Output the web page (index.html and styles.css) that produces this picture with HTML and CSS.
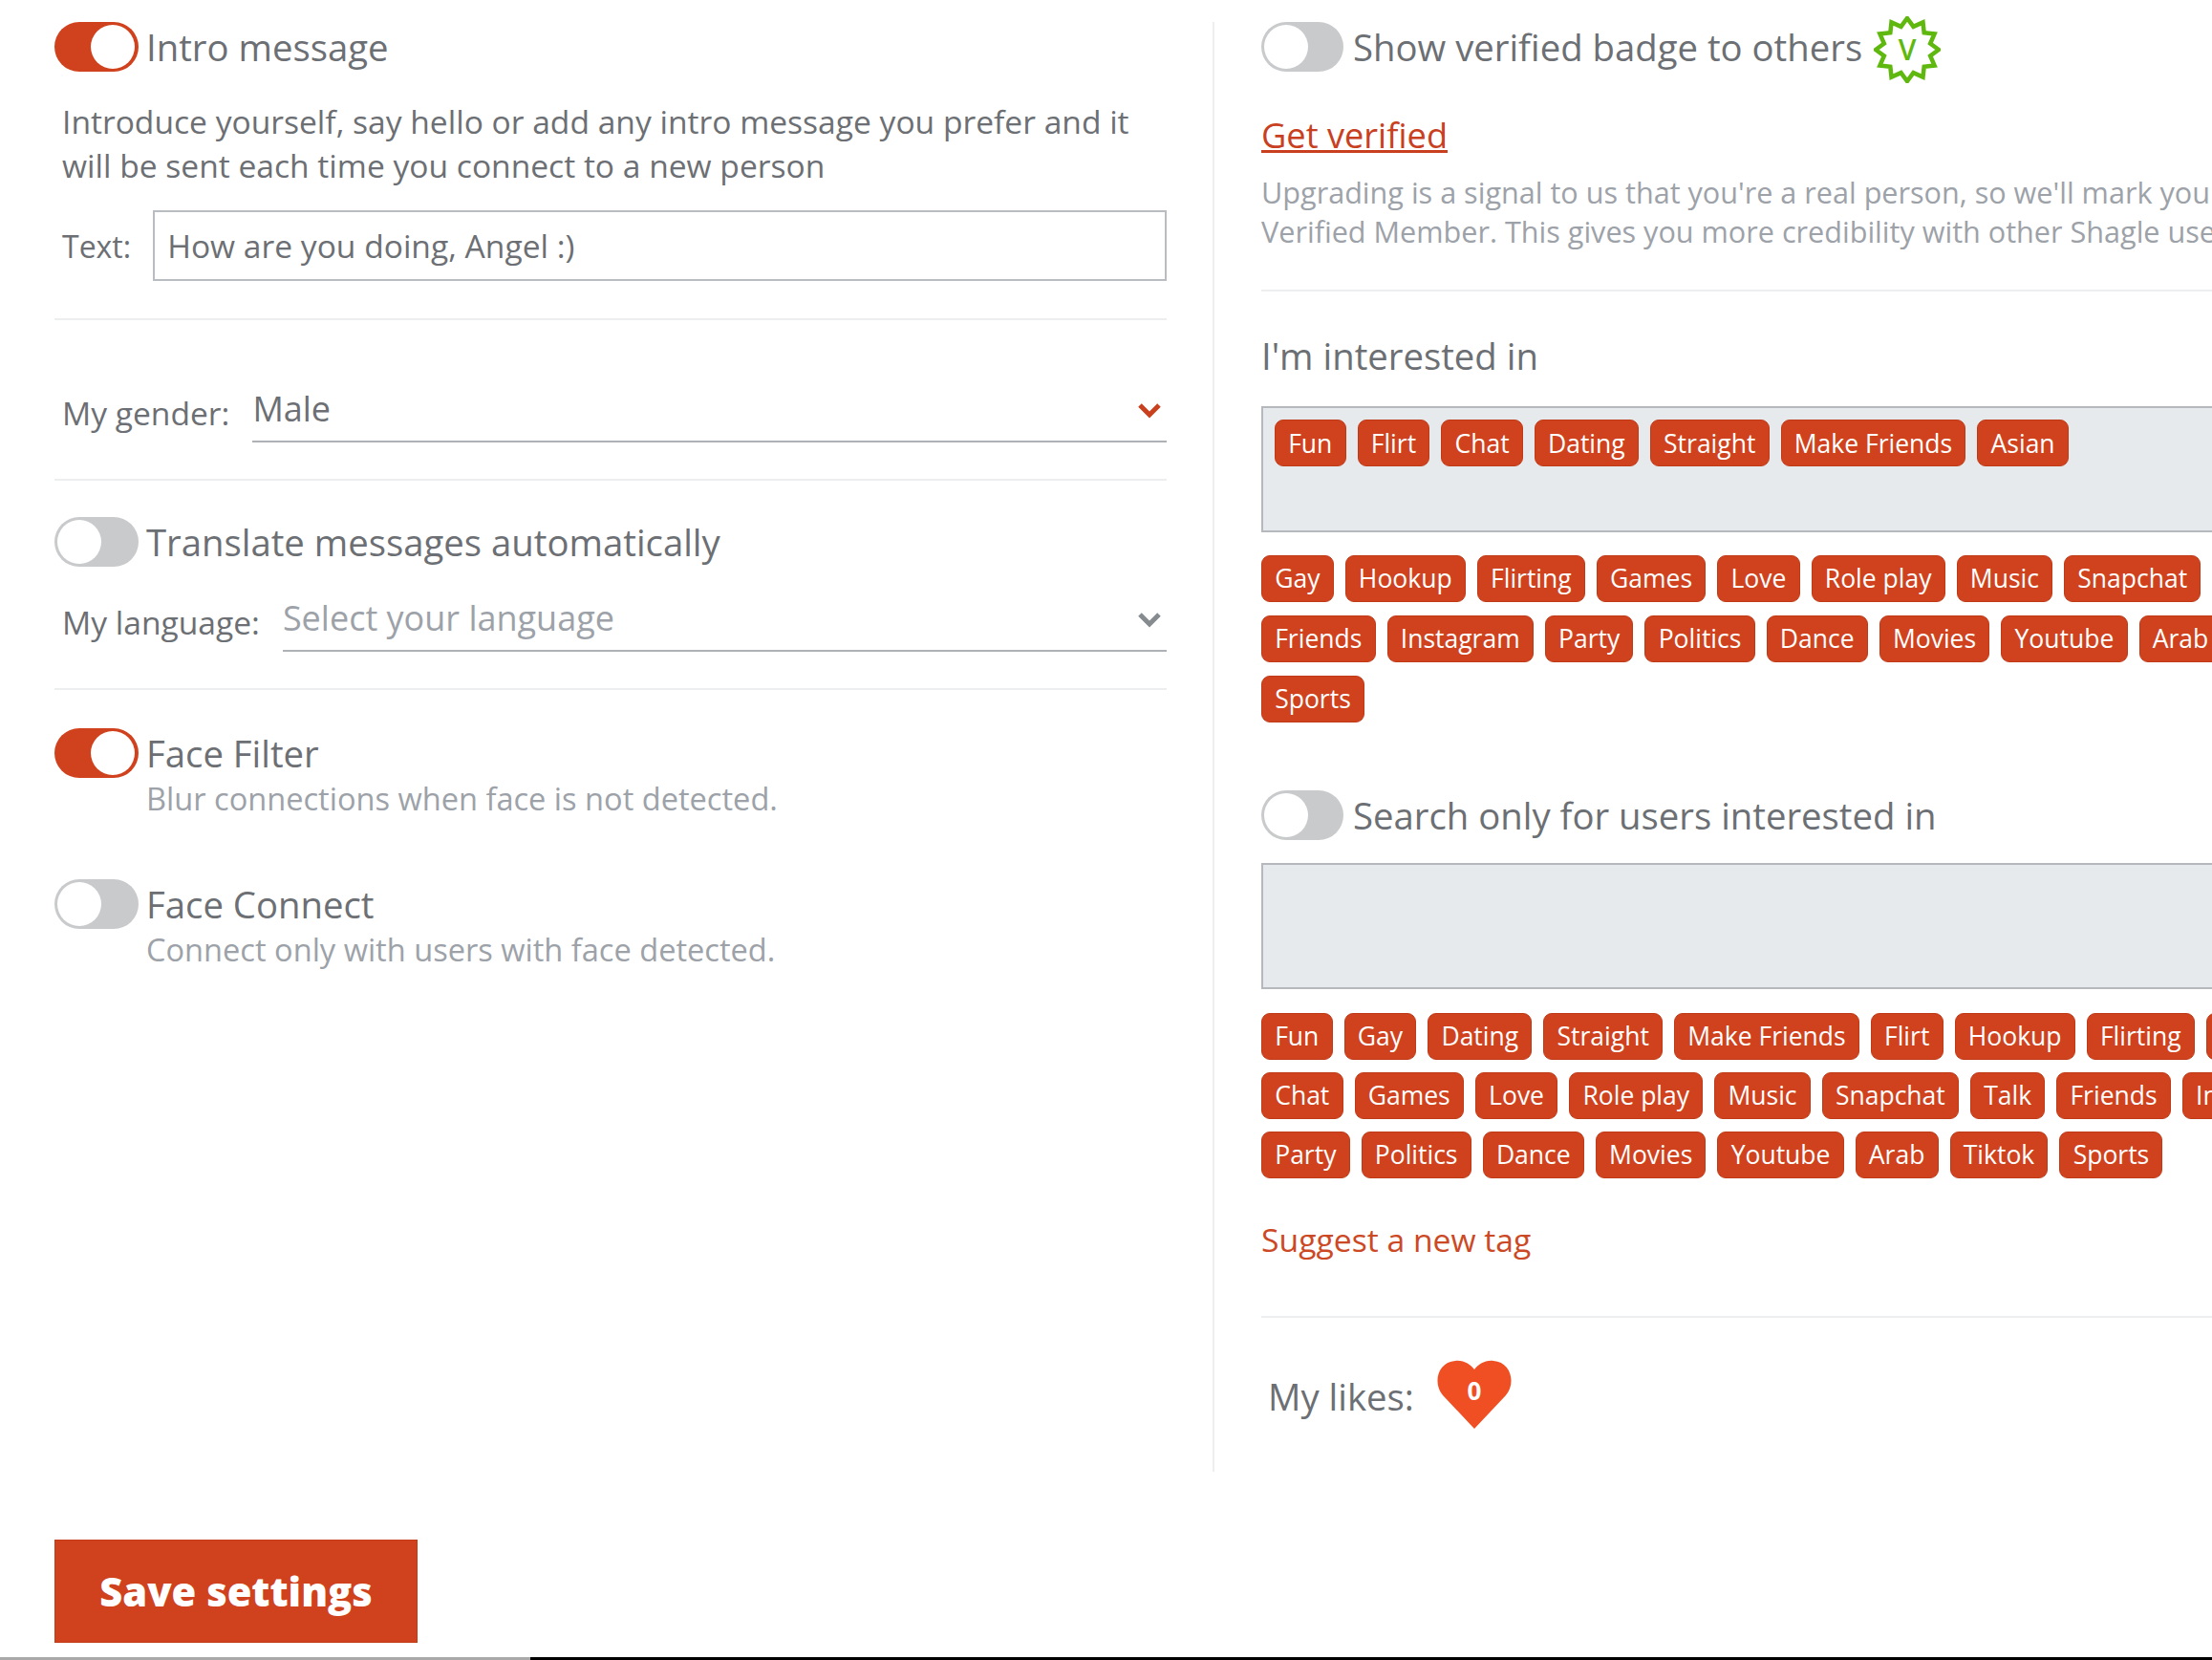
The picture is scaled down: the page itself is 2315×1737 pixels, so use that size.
FILE: index.html
```html
<!DOCTYPE html>
<html lang="en">
<head>
<meta charset="utf-8">
<title>Settings</title>
<link rel="stylesheet" href="styles.css">
</head>
<body>
<main class="columns">
  <section class="col-left">
    <div class="toggle-row">
      <span class="toggle on"></span>
      <div class="toggle-title">Intro message</div>
    </div>
    <p class="desc">Introduce yourself, say hello or add any intro message you prefer and it<br>will be sent each time you connect to a new person</p>
    <div class="text-row">
      <span class="label">Text:</span>
      <div class="text-input">How are you doing, Angel :)</div>
    </div>
    <hr class="rule rule-a">
    <div class="select-row gender-row">
      <span class="label select-label">My gender:</span>
      <div class="select">
        <span>Male</span>
        <svg class="chev" viewBox="0 0 26 17"><path d="M3 3l10 10L23 3" fill="none" stroke="#c9401e" stroke-width="5"/></svg>
      </div>
    </div>
    <hr class="rule rule-b">
    <div class="toggle-row mt-b">
      <span class="toggle"></span>
      <div class="toggle-title">Translate messages automatically</div>
    </div>
    <div class="select-row lang-row">
      <span class="label select-label">My language:</span>
      <div class="select placeholder">
        <span>Select your language</span>
        <svg class="chev" viewBox="0 0 26 17"><path d="M3 3l10 10L23 3" fill="none" stroke="#868b90" stroke-width="5"/></svg>
      </div>
    </div>
    <hr class="rule rule-b">
    <div class="toggle-row mt-c">
      <span class="toggle on"></span>
      <div>
        <div class="toggle-title">Face Filter</div>
        <div class="sub">Blur connections when face is not detected.</div>
      </div>
    </div>
    <div class="toggle-row mt-d">
      <span class="toggle"></span>
      <div>
        <div class="toggle-title">Face Connect</div>
        <div class="sub">Connect only with users with face detected.</div>
      </div>
    </div>
  </section>

  <section class="col-right">
    <div class="toggle-row">
      <span class="toggle"></span>
      <div class="toggle-title">Show verified badge to others</div>
      <svg class="badge" viewBox="0 0 70 70"><polygon points="35,2 41.47,10.85 51.5,6.42 52.68,17.32 63.58,18.5 59.15,28.53 68,35 59.15,41.47 63.58,51.5 52.68,52.68 51.5,63.58 41.47,59.15 35,68 28.53,59.15 18.5,63.58 17.32,52.68 6.42,51.5 10.85,41.47 2,35 10.85,28.53 6.42,18.5 17.32,17.32 18.5,6.42 28.53,10.85" fill="#fff" stroke="#5fb80e" stroke-width="4.5"/><text x="35" y="46" text-anchor="middle" class="badge-v">V</text></svg>
    </div>
    <a class="verify-link" href="#">Get verified</a>
    <p class="note">Upgrading is a signal to us that you're a real person, so we'll mark you as a<br>Verified Member. This gives you more credibility with other Shagle users.</p>
    <hr class="rule rule-c">
    <h2 class="heading">I'm interested in</h2>
    <div class="tag-box selected-box">
      <span class="tag">Fun</span><span class="tag">Flirt</span><span class="tag">Chat</span><span class="tag">Dating</span><span class="tag">Straight</span><span class="tag">Make Friends</span><span class="tag">Asian</span>
    </div>
    <div class="tags tags-a">
      <span class="tag">Gay</span><span class="tag">Hookup</span><span class="tag">Flirting</span><span class="tag">Games</span><span class="tag">Love</span><span class="tag">Role play</span><span class="tag">Music</span><span class="tag">Snapchat</span><span class="tag">Talk</span><span class="tag">Friends</span><span class="tag">Instagram</span><span class="tag">Party</span><span class="tag">Politics</span><span class="tag">Dance</span><span class="tag">Movies</span><span class="tag">Youtube</span><span class="tag">Arab</span><span class="tag">Tiktok</span><span class="tag">Sports</span>
    </div>
    <div class="toggle-row mt-e">
      <span class="toggle"></span>
      <div class="toggle-title">Search only for users interested in</div>
    </div>
    <div class="tag-box empty-box"></div>
    <div class="tags tags-b">
      <span class="tag">Fun</span><span class="tag">Gay</span><span class="tag">Dating</span><span class="tag">Straight</span><span class="tag">Make Friends</span><span class="tag">Flirt</span><span class="tag">Hookup</span><span class="tag">Flirting</span><span class="tag">Asian</span><span class="tag">Chat</span><span class="tag">Games</span><span class="tag">Love</span><span class="tag">Role play</span><span class="tag">Music</span><span class="tag">Snapchat</span><span class="tag">Talk</span><span class="tag">Friends</span><span class="tag">Instagram</span><span class="tag">Party</span><span class="tag">Politics</span><span class="tag">Dance</span><span class="tag">Movies</span><span class="tag">Youtube</span><span class="tag">Arab</span><span class="tag">Tiktok</span><span class="tag">Sports</span>
    </div>
    <a class="suggest" href="#">Suggest a new tag</a>
    <hr class="rule rule-d">
    <div class="likes">
      <span class="likes-label">My likes:</span>
      <svg class="heart" viewBox="0 0 80 72"><path d="M40 72L7 37C-4 24 2 2 20 1c9-1 16 4 20 9 4-5 11-10 20-9 18 1 24 23 13 36z" fill="#f04e23"/><text x="40" y="42" text-anchor="middle" class="heart-num">0</text></svg>
    </div>
  </section>
</main>
<button class="save" type="button">Save settings</button>
<div class="strip"><span class="strip-gray"></span><span class="strip-black"></span></div>
</body>
</html>
```
FILE: styles.css
```css
* { box-sizing: border-box; }
html, body { margin: 0; padding: 0; }
body {
  width: 2315px;
  height: 1737px;
  overflow: hidden;
  background: #fff;
  color: #6c6f73;
  font-family: "Open Sans", "Liberation Sans", sans-serif;
}
.columns { display: flex; padding: 23px 0 0 57px; height: 1540px; }
.col-left { flex: none; width: 1164px; }
.col-right {
  flex: none;
  width: 1215px;
  margin-left: 48px;
  padding-left: 49px;
  border-left: 2px solid #eceeef;
}
.toggle-row { display: flex; align-items: flex-start; gap: 8px; }
.col-right .toggle { width: 86px; }
.col-right .toggle-row { gap: 10px; }
.toggle {
  flex: none;
  position: relative;
  width: 88px;
  height: 52px;
  border-radius: 26px;
  background: #c9cacc;
}
.toggle::after {
  content: "";
  position: absolute;
  top: 3px;
  left: 3px;
  width: 46px;
  height: 46px;
  border-radius: 50%;
  background: #fff;
}
.toggle.on { background: #d0421e; }
.toggle.on::after { left: 38px; }
.toggle-title { font-size: 38.3px; line-height: 52px; white-space: nowrap; }
.sub { font-size: 32.6px; line-height: 36px; margin-top: 4px; color: #9da2a9; white-space: nowrap; }
.desc { margin: 29px 0 0 8px; font-size: 33.6px; line-height: 46px; white-space: nowrap; }
.label { font-size: 33.6px; white-space: nowrap; }
.text-row { display: flex; align-items: center; margin: 24px 0 0 8px; gap: 23px; }
.text-row .label { font-size: 32px; }
.text-input {
  flex: 1;
  height: 74px;
  padding-left: 13px;
  border: 2px solid #b9bcc0;
  font-size: 33.6px;
  line-height: 70px;
}
.rule { display: block; height: 2px; margin: 0; border: 0; background: #eceeef; }
.rule-a { margin-top: 39px; }
.rule-b { margin-top: 38px; }
.rule-c { margin-top: 40px; }
.rule-d { margin-top: 57px; }
.select-row { display: flex; align-items: center; margin-left: 8px; gap: 24px; }
.gender-row { margin-top: 58px; }
.lang-row { margin-top: 19px; }
.select-label { padding-top: 8px; }
.select {
  flex: 1;
  display: flex;
  justify-content: space-between;
  align-items: center;
  height: 70px;
  padding-right: 5px;
  border-bottom: 2px solid #aeb1b5;
  font-size: 36px;
}
.select.placeholder { color: #9da2a9; }
.chev { width: 26px; height: 17px; margin-top: 4px; }
.mt-b { margin-top: 38px; }
.mt-c { margin-top: 40px; }
.mt-d { margin-top: 66px; }
.mt-e { margin-top: 71px; }
.badge { flex: none; width: 70px; height: 70px; margin: -6px 0 -12px 2px; }
.badge-v { font-size: 30px; font-weight: 600; fill: #5fb80e; font-family: "Open Sans", sans-serif; }
.verify-link {
  display: block;
  width: fit-content;
  margin-top: 43px;
  font-size: 36.2px;
  line-height: 46px;
  color: #c8401f;
}
.note { margin: 17px 0 0; font-size: 30.6px; line-height: 41px; color: #9da2a9; white-space: nowrap; }
.heading { margin: 42px 0 0; font-size: 38.3px; line-height: 50px; font-weight: 400; }
.tag-box {
  display: flex;
  gap: 12px;
  width: 1164px;
  background: #e7eaed;
  border: 2px solid #b5b9bd;
}
.selected-box { height: 132px; margin-top: 28px; padding: 12px 0 0 12px; }
.empty-box { height: 132px; margin-top: 24px; }
.tags { display: flex; flex-wrap: wrap; width: 1164px; gap: 14px 12px; }
.tags-a { margin-top: 24px; }
.tags-b { margin-top: 25px; row-gap: 13px; }
.tag {
  display: block;
  height: 49px;
  padding: 0 13.2px;
  border: 1px solid #bf3a17;
  border-radius: 9px;
  background: #d0421e;
  color: #fff;
  font-size: 26.5px;
  line-height: 46px;
  white-space: nowrap;
}
.selected-box .tag { line-height: 48px; }
.suggest {
  display: block;
  width: fit-content;
  margin-top: 41px;
  font-size: 33.7px;
  line-height: 46px;
  color: #cc4925;
  text-decoration: none;
}
.likes { display: flex; align-items: center; margin-top: 44px; padding-left: 7px; gap: 23px; }
.likes-label { font-size: 38.3px; padding-top: 4px; }
.heart { flex: none; width: 80px; height: 72px; }
.heart-num { font-size: 26px; font-weight: 700; fill: #fff; font-family: "Open Sans", sans-serif; }
.save {
  display: block;
  width: 380px;
  height: 108px;
  margin: 71px 0 0 57px;
  padding: 0;
  border: 1px solid #c23c18;
  background: #d0421e;
  color: #fff;
  font-family: "Open Sans", sans-serif;
  font-size: 41.6px;
  font-weight: 800;
}
.strip { display: flex; height: 3px; margin-top: 15px; }
.strip-gray { width: 555px; background: #a9a9a9; }
.strip-black { flex: 1; background: #000; }
```
